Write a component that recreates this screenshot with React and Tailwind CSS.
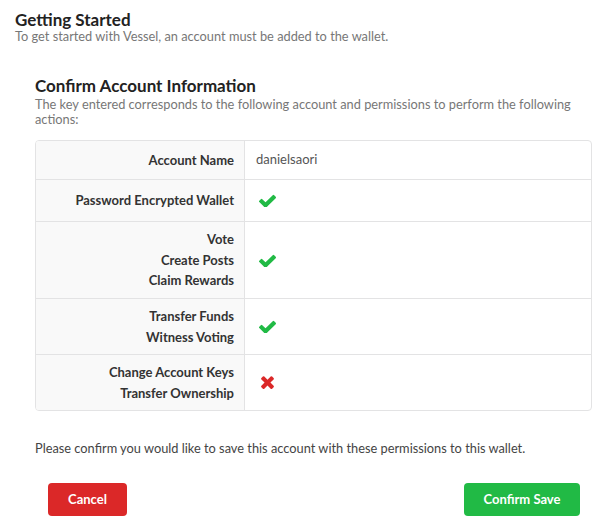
import React from "react";

function Check() {
  return (
    <svg width="17" height="13" viewBox="120 270 1551 1156" className="block">
      <path
        fill="#21ba45"
        d="M1671 566q0 40-28 68l-724 724-136 136q-28 28-68 28t-68-28l-136-136-362-362q-28-28-28-68t28-68l136-136q28-28 68-28t68 28l294 295 656-657q28-28 68-28t68 28l136 136q28 28 28 68z"
      />
    </svg>
  );
}

function Cross() {
  return (
    <svg width="13" height="13" viewBox="110 346 1188 1208" className="block">
      <path
        fill="#db2828"
        d="M1298 1322q0 40-28 68l-136 136q-28 28-68 28t-68-28l-294-294-294 294q-28 28-68 28t-68-28l-136-136q-28-28-28-68t28-68l294-294-294-294q-28-28-28-68t28-68l136-136q28-28 68-28t68 28l294 294 294-294q28-28 68-28t68 28l136 136q28 28 28 68t-28 68l-294 294 294 294q28 28 28 68z"
      />
    </svg>
  );
}

const rows = [
  { labels: ["Account Name"], value: "danielsaori", h: "h-[38px]" },
  { labels: ["Password Encrypted Wallet"], icon: "check", h: "h-[42px]" },
  { labels: ["Vote", "Create Posts", "Claim Rewards"], icon: "check", h: "h-[77px]" },
  { labels: ["Transfer Funds", "Witness Voting"], icon: "check", h: "h-[56px]" },
  { labels: ["Change Account Keys", "Transfer Ownership"], icon: "cross", h: "h-[56px]" },
];

export default function App() {
  return (
    <div
      className="w-[599px] h-[532px] bg-white overflow-hidden"
      style={{ fontFamily: "Lato, 'Noto Sans', sans-serif" }}
    >
      <div className="pl-[15px] pt-[11px]">
        <div className="text-[17px] font-bold leading-[18px] text-[#222]">Getting Started</div>
        <div className="text-[12.8px] leading-[14px] text-[#777]">
          To get started with Vessel, an account must be added to the wallet.
        </div>
      </div>
      <div className="pl-[35px] pr-[7px] pt-[33px]">
        <div className="text-[17px] font-bold leading-[20px] text-[#222]">Confirm Account Information</div>
        <div className="mt-[1px] text-[12.8px] leading-[14.5px] text-[#777]">
          The key entered corresponds to the following account and permissions to perform the following actions:
        </div>
        <div className="mt-[14px] border border-[#e3e3e4] rounded-[4px] overflow-hidden">
          {rows.map((r, i) => (
            <div key={i} className={`flex ${r.h} ${i > 0 ? "border-t border-[#e3e3e4]" : ""}`}>
              <div className="w-[209px] shrink-0 bg-[#f9f9f9] border-r border-[#e3e3e4] flex flex-col justify-center items-end pr-[10px] text-[13px] font-bold leading-[20.5px] text-[#333]">
                {r.labels.map((l) => (
                  <div key={l}>{l}</div>
                ))}
              </div>
              <div className="flex-1 flex items-center pl-[11px] text-[13px] text-[#555]">
                {r.value}
                {r.icon === "check" && <span className="ml-[3px]"><Check /></span>}
                {r.icon === "cross" && <span className="ml-[5px]"><Cross /></span>}
              </div>
            </div>
          ))}
        </div>
        <div className="mt-[29px] text-[12.8px] leading-[16px] text-[#444]">
          Please confirm you would like to save this account with these permissions to this wallet.
        </div>
        <div className="mt-[27px] flex justify-between pl-[13px] pr-[12px]">
          <button className="w-[79px] h-[33px] rounded-[4px] bg-[#db2828] text-white text-[13px] font-bold">
            Cancel
          </button>
          <button className="w-[116px] h-[33px] rounded-[4px] bg-[#21ba45] text-white text-[13px] font-bold">
            Confirm Save
          </button>
        </div>
      </div>
    </div>
  );
}
